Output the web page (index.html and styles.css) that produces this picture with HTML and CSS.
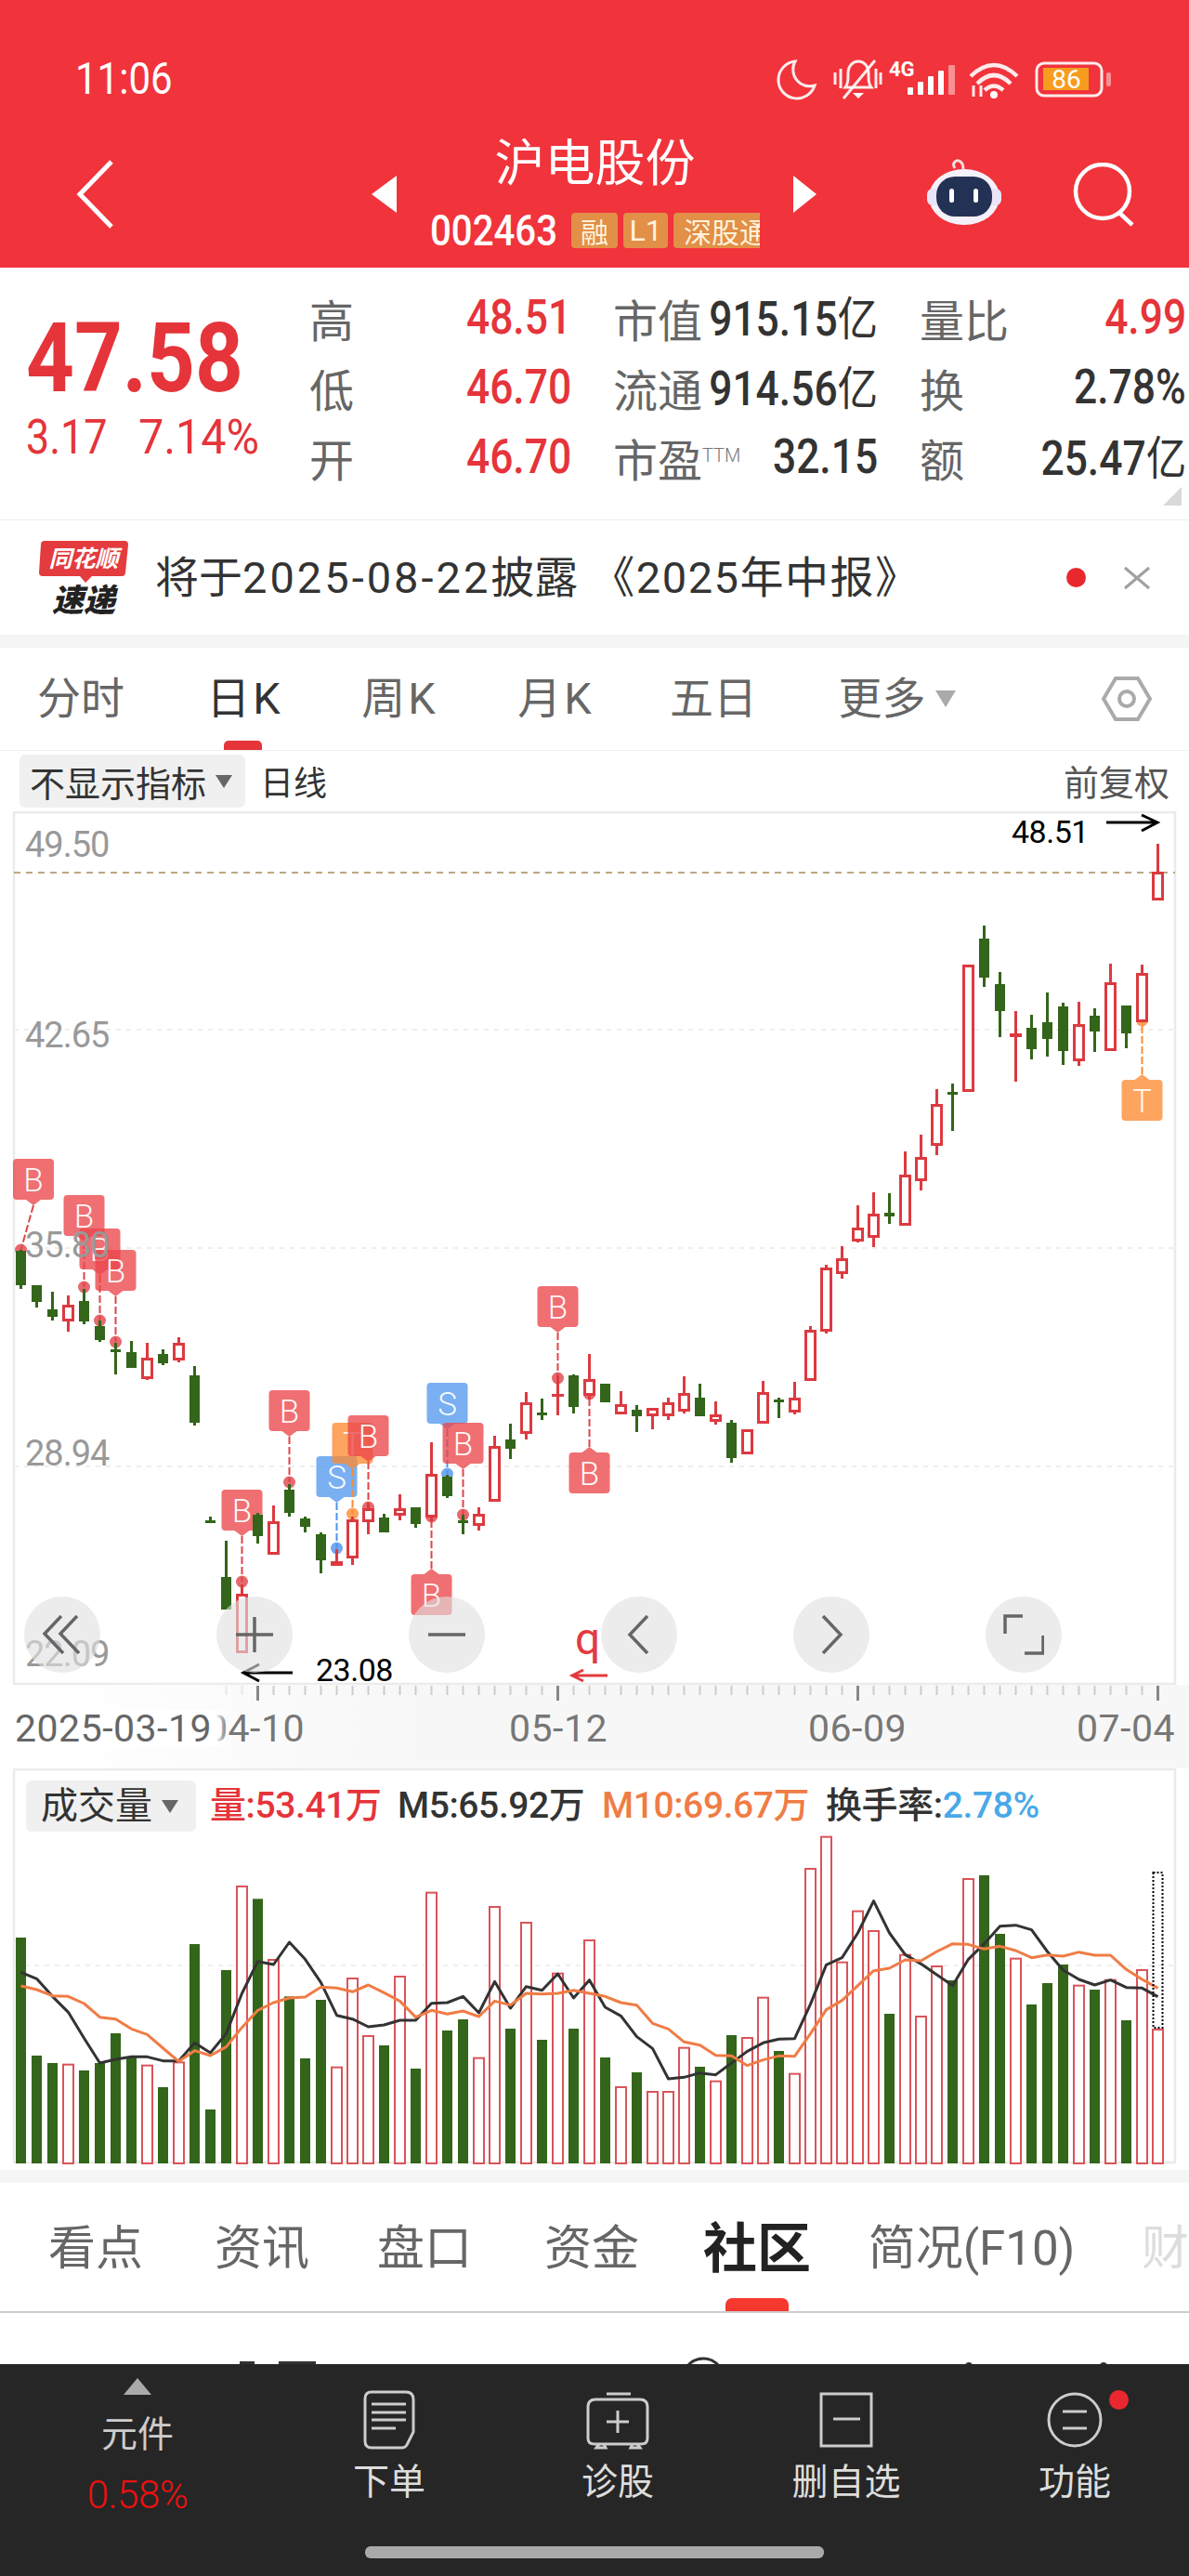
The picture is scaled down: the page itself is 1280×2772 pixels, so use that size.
FILE: index.html
```html
<!DOCTYPE html>
<html lang="zh-CN">
<head>
    <meta charset="UTF-8">
    <title>沪电股份 002463</title>
    <link rel="stylesheet" href="styles.css">
</head>
<body>
    <header class="top-bar">
        <div class="status-bar">
            <span class="clock">11:06</span>
            <svg class="status-icons" width="362" height="48" viewBox="838 62 362 48">
                <path class="ico-line" d="M858 66a20 20 0 1 0 21 26a18 18 0 0 1-21-26z"/>
                <path class="ico-line" d="M912 94c3-4 3-8 3-15c0-8 5-13 11-13s11 5 11 13c0 7 0 11 3 15z"/>
                <path class="ico-line" d="M944 65l-34 41M901 78v13M907 74v21M945 74v21M950 78v13"/>
                <path class="ico-fill" d="M920 100h12l-6 6z"/>
                <text class="ico-4g" x="959" y="82">4G</text>
                <rect class="ico-fill" x="979" y="94" width="6" height="8" rx="1"/>
                <rect class="ico-fill" x="990" y="88" width="6" height="14" rx="1"/>
                <rect class="ico-fill" x="1001" y="82" width="6" height="20" rx="1"/>
                <rect class="ico-fill" x="1012" y="76" width="6" height="26" rx="1"/>
                <rect class="ico-fill ico-dim" x="1023" y="70" width="7" height="32" rx="1"/>
                <path class="ico-line ico-wifi" d="M1047 82Q1072 58 1097 82M1054 90Q1072 72 1090 90M1062 97Q1072 88 1082 97"/>
                <circle class="ico-fill" cx="1072" cy="102" r="4"/>
                <path class="ico-line" d="M1050 92v12M1058 92v12"/>
                <rect class="ico-line" x="1118" y="68" width="70" height="35" rx="8"/>
                <rect class="ico-battery" x="1125" y="73" width="49" height="24"/>
                <rect class="ico-fill ico-dim" x="1193" y="78" width="5" height="15" rx="2"/>
                <text class="ico-86" x="1150" y="95">86</text>
            </svg>
        </div>
        <nav class="stock-nav">
            <svg class="back-icon" width="44" height="76" viewBox="0 0 44 76"><path d="M38 3L4 38l34 35"/></svg>
            <div class="stock-switch">
                <span class="tri-left"></span>
                <div class="stock-name">
                    <h1>沪电股份</h1>
                    <div class="stock-code">
                        <b>002463</b>
                        <span class="tag">融</span>
                        <span class="tag tag-l1">L1</span>
                        <span class="tag tag-clip">深股通</span>
                    </div>
                </div>
                <span class="tri-right"></span>
            </div>
            <svg class="robot-icon" width="80" height="74" viewBox="0 0 80 74">
                <path class="robot-ant" d="M30 12c-4-6 2-10 6-7c3 2 3 6 3 9"/>
                <ellipse class="robot-head" cx="40" cy="43" rx="38" ry="30"/>
                <rect class="robot-side" x="0" y="34" width="80" height="18" rx="6"/>
                <rect class="robot-face" x="10" y="21" width="60" height="43" rx="20"/>
                <rect class="robot-eye" x="24" y="34" width="5" height="15" rx="2.5"/>
                <rect class="robot-eye" x="50" y="34" width="5" height="15" rx="2.5"/>
            </svg>
            <svg class="search-icon" width="68" height="70" viewBox="0 0 68 70"><circle cx="32" cy="31" r="29"/><path d="M50 54l14 13"/></svg>
        </nav>
    </header>

    <section class="quote">
        <div class="price-box">
            <div class="price">47.58</div>
            <div class="price-change"><span class="change-abs">3.17</span><span class="change-pct">7.14%</span></div>
        </div>
        <div class="quote-grid">
            <div class="cell"><span class="cell-name">高</span><span class="num up">48.51</span></div>
            <div class="cell"><span class="cell-name">市值</span><span class="num">915.15<i class="unit">亿</i></span></div>
            <div class="cell"><span class="cell-name">量比</span><span class="num up">4.99</span></div>
            <div class="cell"><span class="cell-name">低</span><span class="num up">46.70</span></div>
            <div class="cell"><span class="cell-name">流通</span><span class="num">914.56<i class="unit">亿</i></span></div>
            <div class="cell"><span class="cell-name">换</span><span class="num">2.78%</span></div>
            <div class="cell"><span class="cell-name">开</span><span class="num up">46.70</span></div>
            <div class="cell"><span class="cell-name">市盈<small>TTM</small></span><span class="num">32.15</span></div>
            <div class="cell"><span class="cell-name">额</span><span class="num">25.47<i class="unit">亿</i></span></div>
        </div>
        <span class="corner-mark"></span>
    </section>

    <section class="news">
        <svg class="news-logo" width="96" height="80" viewBox="0 0 96 80">
            <path class="logo-bubble" d="M6 0h86q4 0 4 4l-3 30q0 4-4 4h-32l-7 7l-6-7h-40q-4 0-4-4l2-30q0-4 4-4z"/>
            <text class="logo-top" x="48" y="28">同花顺</text>
            <text class="logo-bottom" x="48" y="76">速递</text>
        </svg>
        <p class="news-text">将于<span class="news-date">2025-08-22</span>披露<span class="news-book">《2025年中报》</span></p>
        <span class="news-dot"></span>
        <svg class="news-close" width="30" height="26" viewBox="0 0 30 26"><path d="M2 2l26 22M28 2L2 24"/></svg>
    </section>

    <div class="band"></div>

    <nav class="period-tabs">
        <span>分时</span>
        <span class="active">日<i class="k">K</i></span>
        <span>周<i class="k">K</i></span>
        <span>月<i class="k">K</i></span>
        <span>五日</span>
        <span class="more">更多<i class="drop"></i></span>
        <svg class="hex-icon" width="54" height="50" viewBox="0 0 54 50"><path d="M15 3h24l13 22l-13 22H15L2 25z"/><circle cx="27" cy="25" r="8"/></svg>
    </nav>

    <div class="chart-head">
        <span class="select-box">不显示指标<i class="drop drop-dark"></i></span>
        <span class="chart-type">日线</span>
        <span class="adjust">前复权</span>
    </div>

    <div class="kline">
        <svg id="klineSvg" width="1280" height="940" viewBox="0 873 1280 940"></svg>
        <div class="chart-controls">
            <span class="round-btn"><svg width="42" height="42" viewBox="0 0 42 42"><path d="M20 1L2 20l20 21M37 1L19 20l20 21"/></svg></span>
            <span class="round-btn"><svg width="42" height="42" viewBox="0 0 42 42"><path d="M1 21h40M21 2v38"/></svg></span>
            <span class="round-btn"><svg width="42" height="42" viewBox="0 0 42 42"><path d="M1 21h40"/></svg></span>
            <span class="round-btn"><svg width="42" height="42" viewBox="0 0 42 42"><path d="M30 1L11 21l19 20"/></svg></span>
            <span class="round-btn"><svg width="42" height="42" viewBox="0 0 42 42"><path d="M12 1l19 20l-19 20"/></svg></span>
            <span class="round-btn"><svg width="44" height="44" viewBox="0 0 44 44"><path d="M21 2H2v19M43 23v19H23"/></svg></span>
        </div>
    </div>

    <div class="date-axis">
        <svg id="tickSvg" width="1280" height="18" viewBox="0 0 1280 18"></svg>
        <div class="date-labels">
            <span class="date-first">2025-03-19</span>
            <span>04-10</span>
            <span>05-12</span>
            <span>06-09</span>
            <span>07-04</span>
        </div>
    </div>

    <div class="volume">
        <svg id="volumeSvg" width="1280" height="432" viewBox="0 1903 1280 432"></svg>
        <div class="volume-legend">
            <span class="select-box select-vol">成交量<i class="drop drop-dark"></i></span>
            <span class="up">量:53.41万</span>
            <span>M5:65.92万</span>
            <span class="ma10">M10:69.67万</span>
            <span>换手率:<em>2.78%</em></span>
        </div>
    </div>

    <div class="band"></div>

    <nav class="info-tabs">
        <span>看点</span>
        <span>资讯</span>
        <span>盘口</span>
        <span>资金</span>
        <span class="active">社区</span>
        <span>简况(F10)</span>
        <span class="faded">财</span>
    </nav>

    <div class="peek">
        <svg width="1280" height="55" viewBox="0 2489 1280 55">
            <circle class="peek-arc" cx="757" cy="2560" r="22"/>
            <rect class="peek-mark" x="258" y="2541" width="16" height="3"/>
            <rect class="peek-mark" x="300" y="2541" width="40" height="3"/>
            <circle class="peek-dot" cx="1043" cy="2546" r="4"/>
            <circle class="peek-dot" cx="1188" cy="2546" r="4"/>
        </svg>
    </div>

    <footer class="action-bar">
        <div class="action action-sector">
            <i class="sector-tri"></i>
            <span>元件</span>
            <b>0.58%</b>
        </div>
        <div class="action">
            <svg width="56" height="64" viewBox="0 0 56 64"><path d="M9 2h37q8 0 8 8v35l-7 14q-2 3-5 3H9q-7 0-7-7V9q0-7 7-7z"/><path d="M9 15h37M9 24h37M9 32h37M9 41h26"/></svg>
            <span>下单</span>
        </div>
        <div class="action">
            <svg width="68" height="64" viewBox="0 0 68 64"><path d="M22 4h26"/><path d="M10 10h48q8 0 8 8v34q0 6-7 6H9q-7 0-7-6V18q0-8 8-8z"/><path d="M34 22v24M22 34h24M14 58l-3 4h10l-2-4M50 58l-2 4h10l-3-4"/></svg>
            <span>诊股</span>
        </div>
        <div class="action">
            <svg width="58" height="64" viewBox="0 0 58 64"><path d="M2 4h54v56H2z"/><path d="M15 31h29"/></svg>
            <span>删自选</span>
        </div>
        <div class="action action-menu">
            <svg width="62" height="64" viewBox="0 0 62 64"><circle cx="31" cy="32" r="28"/><path d="M18 23h26M18 41h26"/></svg>
            <i class="menu-dot"></i>
            <span>功能</span>
        </div>
        <div class="home-bar"></div>
    </footer>

    <script src="script.js"></script>
</body>
</html>
```
FILE: styles.css
```css
* {
    margin: 0;
    padding: 0;
    box-sizing: border-box;
}

:root {
    --num: Roboto, sans-serif;
    --cjk: "Noto Sans CJK SC", sans-serif;
    --up: #e5343a;
    --down: #33651a;
}

body {
    width: 1280px;
    height: 2772px;
    overflow: hidden;
    background: #fff;
    color: #333;
    font-family: Roboto, "Noto Sans CJK SC", sans-serif;
}

i, em {
    font-style: normal;
}

.up {
    color: var(--up);
}

/* Red header */
.top-bar {
    height: 288px;
    background: #f1333b;
    color: #fff;
}

.status-bar {
    height: 142px;
    display: flex;
    align-items: flex-start;
    justify-content: space-between;
    padding: 62px 82px 0 81px;
}

/* the app's digits are narrower than Roboto, so they are squeezed */
.clock {
    width: 105px;
    font-size: 48px;
    line-height: 46px;
    white-space: nowrap;
    transform: scaleX(.875);
    transform-origin: left;
}

.ico-line {
    fill: none;
    stroke: #fff;
    stroke-width: 3;
    stroke-opacity: .9;
}

.ico-wifi {
    stroke-width: 4.5;
}

.ico-fill {
    fill: #fff;
}

.ico-dim {
    opacity: .45;
}

.ico-battery {
    fill: #f79c1f;
}

.ico-4g {
    fill: #fff;
    font: 700 22px Roboto, sans-serif;
}

.ico-86 {
    fill: #fff;
    font: 400 28px Roboto, sans-serif;
    text-anchor: middle;
}

.stock-nav {
    height: 146px;
    display: flex;
    align-items: flex-start;
    padding-left: 82px;
    position: relative;
}

.back-icon {
    margin-top: 29px;
    fill: none;
    stroke: #fff;
    stroke-width: 5;
}

.stock-switch {
    display: flex;
    align-items: flex-start;
    margin-left: 274px;
    width: 479px;
    justify-content: space-between;
}

.tri-left, .tri-right {
    width: 0;
    height: 0;
    margin-top: 47px;
    border-top: 20px solid transparent;
    border-bottom: 20px solid transparent;
}

.tri-left {
    border-right: 27px solid #fff;
}

.tri-right {
    border-left: 25px solid #fff;
}

.stock-name {
    text-align: center;
}

.stock-name h1 {
    font: 400 54px/60px var(--cjk);
}

.stock-code {
    display: flex;
    align-items: center;
    margin-top: 27px;
}

.stock-code b {
    width: 135px;
    font: 500 47px/38px var(--num);
    margin-right: 17px;
    white-space: nowrap;
    text-align: left;
    transform: scaleX(.855);
    transform-origin: left;
}

.tag {
    height: 38px;
    width: 50px;
    margin-right: 6px;
    background: #e28f47;
    border-radius: 4px;
    color: #fff3dc;
    font: 400 30px/38px var(--cjk);
    text-align: center;
}

.tag-l1 {
    width: 48px;
    font-family: Roboto, sans-serif;
    font-size: 32px;
}

.tag-clip {
    width: 93px;
    margin-right: 0;
    padding-left: 11px;
    overflow: hidden;
    text-align: left;
    white-space: nowrap;
    border-radius: 4px 0 0 4px;
}

.robot-icon {
    margin-left: 119px;
    margin-top: 27px;
}

.robot-ant {
    fill: none;
    stroke: #f5dcdc;
    stroke-width: 3;
}

.robot-head {
    fill: #f4f1fb;
}

.robot-side {
    fill: #e9e4f7;
}

.robot-face {
    fill: #233254;
}

.robot-eye {
    fill: #fff;
}

.search-icon {
    margin-left: 77px;
    margin-top: 33px;
    fill: none;
    stroke: #fff;
    stroke-width: 4.5;
}

/* Quote block */
.quote {
    height: 271px;
    display: flex;
    position: relative;
}

.price-box {
    width: 335px;
    padding: 48px 0 0 28px;
    color: var(--up);
}

.price {
    font: 700 104px/100px var(--num);
    transform: scaleX(.87);
    transform-origin: left;
}

.price-change {
    display: flex;
    margin-top: 12px;
    font: 400 51px/46px var(--num);
    white-space: nowrap;
}

.change-abs {
    width: 121px;
    transform: scaleX(.88);
    transform-origin: left;
}

.change-pct {
    transform: scaleX(.95);
    transform-origin: left;
}

.quote-grid {
    display: grid;
    grid-template-columns: 280px 283px 285px;
    grid-auto-rows: 75px;
    column-gap: 47px;
    padding-top: 16px;
}

.cell {
    display: flex;
    align-items: center;
    justify-content: space-between;
    white-space: nowrap;
}

.cell-name {
    margin-left: -2px;
    font: 400 48px/60px var(--cjk);
    color: #666;
}

.cell-name small {
    font: 300 20px/20px Roboto, sans-serif;
    vertical-align: 16px;
    color: #777;
}

.num {
    margin-left: -40px;
    font: 500 51px/60px var(--num);
    transform: scaleX(.87);
    transform-origin: right;
}

.unit {
    font: 400 50px/60px var(--cjk);
}

.corner-mark {
    position: absolute;
    right: 8px;
    bottom: 15px;
    width: 0;
    height: 0;
    border-left: 20px solid transparent;
    border-bottom: 20px solid #d9d9d9;
}

/* News strip */
.news {
    height: 124px;
    display: flex;
    align-items: center;
    padding: 0 41px 0 42px;
    border-top: 1px solid #ececec;
}

.logo-bubble {
    fill: #e33b3e;
}

.logo-top {
    fill: #fff;
    font: italic 700 25px var(--cjk);
    text-anchor: middle;
}

.logo-bottom {
    fill: #222;
    font: italic 900 34px var(--cjk);
    text-anchor: middle;
}

.news-text {
    margin-left: 29px;
    flex: 1;
    font: 400 47px/60px Roboto, "Noto Sans CJK SC", sans-serif;
    white-space: nowrap;
}

.news-date {
    letter-spacing: 3px;
}

.news-book {
    margin-left: 14px;
    letter-spacing: 1.5px;
}

.news-dot {
    width: 21px;
    height: 21px;
    border-radius: 50%;
    background: #e8282e;
}

.news-close {
    margin-left: 40px;
    fill: none;
    stroke: #a0a0a0;
    stroke-width: 3;
}

.band {
    height: 14px;
    background: #f5f5f5;
}

/* Period tabs */
.period-tabs {
    height: 111px;
    display: grid;
    grid-template-columns: 174px 176px 158px 178px 164px 202px 1fr;
    align-items: center;
    border-bottom: 1px solid #eee;
    color: #666;
    font: 400 47px/60px Roboto, "Noto Sans CJK SC", sans-serif;
    text-align: center;
}

.k {
    margin-left: 3px;
}

.period-tabs .active {
    position: relative;
    color: #333;
}

.period-tabs .active::after {
    content: '';
    position: absolute;
    left: 67px;
    width: 41px;
    bottom: -25px;
    height: 10px;
    border-radius: 5px 5px 0 0;
    background: #e6343a;
}

.more {
    display: flex;
    align-items: center;
    justify-content: center;
    padding-left: 29px;
}

.drop {
    display: inline-block;
    width: 0;
    height: 0;
    margin-left: 10px;
    border-left: 11px solid transparent;
    border-right: 11px solid transparent;
    border-top: 18px solid #aaa;
}

.hex-icon {
    justify-self: start;
    margin-left: 134px;
    fill: none;
    stroke: #aaa;
    stroke-width: 4;
}

/* Chart heading */
.chart-head {
    height: 65px;
    display: flex;
    align-items: flex-start;
    padding: 4px 21px 0;
    font: 400 38px/56px var(--cjk);
}

.select-box {
    display: flex;
    align-items: center;
    width: 243px;
    height: 57px;
    padding-left: 11px;
    background: #f0f0f0;
    border-radius: 6px;
    color: #333;
}

.drop-dark {
    margin-left: 10px;
    border-left-width: 9px;
    border-right-width: 9px;
    border-top: 14px solid #666;
}

.chart-type {
    margin-left: 16px;
    font-size: 36px;
}

.adjust {
    margin-left: auto;
    color: #555;
}

/* Candlestick chart */
.kline {
    height: 940px;
    position: relative;
}

.kline svg {
    display: block;
}

.frame {
    fill: none;
    stroke: #ebebeb;
    stroke-width: 2.5;
}

.grid-line {
    stroke: #eee;
    stroke-width: 2;
    stroke-dasharray: 5 6;
}

.high-line {
    stroke: #bfa680;
    stroke-width: 2;
    stroke-dasharray: 7 6;
}

.wick-up {
    stroke: #dc3a40;
    stroke-width: 3;
}

.wick-down {
    stroke: var(--down);
    stroke-width: 3;
}

.body-up {
    fill: #fff;
    stroke: #dc3a40;
    stroke-width: 3;
}

.body-solid {
    fill: #dc3a40;
}

.body-down {
    fill: var(--down);
}

.axis-text {
    fill: #999;
    font: 400 38px Roboto, sans-serif;
    letter-spacing: -1px;
}

.extreme-text {
    fill: #000;
    font: 400 34px Roboto, sans-serif;
    letter-spacing: -.5px;
}

.arrow {
    fill: none;
    stroke: #000;
    stroke-width: 3;
}

.arrow-red {
    stroke: #e33b40;
}

.q-text {
    fill: #e33b40;
    font: 400 48px Roboto, sans-serif;
}

.mark-b { fill: rgba(235, 70, 74, .78); }
.mark-s { fill: rgba(78, 148, 236, .75); }
.mark-t { fill: rgba(253, 138, 50, .78); }

.lead-b { stroke: #e0444a; fill: #e0444a; }
.lead-s { stroke: #4e94ec; fill: #4e94ec; }
.lead-t { stroke: #fd8a32; fill: #fd8a32; }

.lead {
    stroke-width: 2;
    stroke-dasharray: 8 3;
}

.dot {
    stroke: none;
    opacity: .8;
}

.mark-text {
    fill: rgba(255, 255, 255, .95);
    font: 300 35px Roboto, sans-serif;
    text-anchor: middle;
}

.chart-controls {
    position: absolute;
    left: 26px;
    top: 845px;
    display: flex;
    gap: 125px;
}

.round-btn {
    width: 82px;
    height: 82px;
    display: flex;
    align-items: center;
    justify-content: center;
    border-radius: 50%;
    background: rgba(224, 224, 224, .62);
}

.round-btn svg {
    fill: none;
    stroke: #666;
    stroke-width: 3.5;
}

/* Dates under the chart */
.date-axis {
    height: 90px;
    background: linear-gradient(to right, #fff 5%, #f7f7f7 35%);
}

.date-axis svg {
    display: block;
}

.tick {
    stroke: #ccc;
    stroke-width: 2;
}

.tick-major {
    stroke: #888;
    stroke-width: 3;
}

.date-labels {
    display: grid;
    grid-template-columns: 206px 326px 322px 289px 1fr;
    padding: 9px 0 0 16px;
    font: 400 41px/40px Roboto, sans-serif;
    letter-spacing: .5px;
    color: #777;
    white-space: nowrap;
}

.date-first {
    position: relative;
    z-index: 1;
    width: 228px;
    color: #666;
    background: linear-gradient(to right, #fff 95%, transparent);
}

/* Volume panel */
.volume {
    height: 432px;
    position: relative;
}

.volume svg {
    display: block;
}

.volume-legend {
    position: absolute;
    left: 28px;
    top: 13px;
    display: grid;
    grid-template-columns: 198px 202px 220px 241px auto;
    align-items: center;
    font: 500 39px/55px Roboto, "Noto Sans CJK SC", sans-serif;
    letter-spacing: -.4px;
    white-space: nowrap;
}

.select-vol {
    width: 183px;
    height: 55px;
    padding-left: 16px;
    font-size: 40px;
    font-weight: 400;
    letter-spacing: 0;
}

.ma10 {
    color: #f07c45;
}

.volume-legend em {
    color: #49a9e8;
}

.bar-up {
    fill: #fff;
    stroke: #d9545a;
    stroke-width: 2;
}

.bar-down {
    fill: var(--down);
}

.ma5, .ma10-line {
    fill: none;
    stroke-width: 3;
    stroke-linejoin: round;
}

.ma5 { stroke: #333; }
.ma10-line { stroke: #f07c45; }

.last-box {
    fill: none;
    stroke: #000;
    stroke-width: 2;
    stroke-dasharray: 2 2;
}

/* Lower tabs */
.info-tabs {
    height: 140px;
    display: grid;
    grid-template-columns: 206px 152px 198px 162px 194px 268px 1fr;
    align-items: center;
    padding-top: 4px;
    border-bottom: 2px solid #ccc;
    color: #666;
    font: 400 51px/60px Roboto, "Noto Sans CJK SC", sans-serif;
    text-align: center;
    white-space: nowrap;
}

.info-tabs .active {
    position: relative;
    color: #222;
    font-size: 58px;
    font-weight: 700;
}

.info-tabs .active::after {
    content: '';
    position: absolute;
    left: 63px;
    width: 68px;
    bottom: -37px;
    height: 14px;
    border-radius: 7px 7px 0 0;
    background: #f5392f;
}

.info-tabs .faded {
    text-align: left;
    padding-left: 49px;
    color: #ddd;
}

.peek {
    height: 55px;
}

.peek svg {
    display: block;
}

.peek-arc {
    fill: none;
    stroke: #333;
    stroke-width: 3;
}

.peek-mark, .peek-dot {
    fill: #333;
}

/* Bottom action bar */
.action-bar {
    height: 228px;
    position: relative;
    display: grid;
    grid-template-columns: 296px repeat(4, 246px);
    background: #262626;
    color: #ddd;
    font: 400 39px/44px var(--cjk);
}

.action {
    display: flex;
    flex-direction: column;
    align-items: center;
    padding-top: 28px;
    position: relative;
}

.action svg {
    fill: none;
    stroke: #ccc;
    stroke-width: 3;
}

.action > span {
    margin-top: 9px;
}

.action-sector {
    padding-top: 15px;
    color: #ccc;
}

.action-sector > span {
    margin-top: 17px;
}

.action-sector b {
    margin-top: 25px;
    font: 300 42px/44px Roboto, sans-serif;
    letter-spacing: -.5px;
    color: #ee1010;
}

.sector-tri {
    width: 0;
    height: 0;
    border-left: 15px solid transparent;
    border-right: 15px solid transparent;
    border-bottom: 18px solid #aaa;
}

.menu-dot {
    position: absolute;
    left: 160px;
    top: 28px;
    width: 21px;
    height: 21px;
    border-radius: 50%;
    background: #e8282e;
}

.home-bar {
    position: absolute;
    left: 393px;
    top: 196px;
    width: 494px;
    height: 13px;
    border-radius: 6px;
    background: #aaa;
}
```
FILE: script.js
```js
// x of candle i on the page
function cx(i) {
    return 22.5 + 17 * i;
}

// [wickTop, bodyTop, bodyBottom, wickBottom, up] in page pixels
const candles = [
    [1345, 1346, 1383, 1387, 0], [1383, 1383, 1401, 1407, 0], [1390, 1409, 1417, 1421, 0], [1394, 1404, 1422, 1433, 1],
    [1387, 1400, 1422, 1425, 0], [1421, 1427, 1442, 1444, 0], [1445, 1452, 1455, 1479, 0], [1443, 1455, 1472, 1472, 0],
    [1445, 1461, 1484, 1485, 1], [1452, 1457, 1467, 1469, 0], [1439, 1445, 1464, 1466, 1], [1470, 1480, 1531, 1534, 0],
    [1632, 1636, 1639, 1639, 0], [1658, 1697, 1732, 1732, 0], [1705, 1715, 1779, 1779, 1], [1628, 1630, 1653, 1661, 0],
    [1620, 1637, 1673, 1673, 1], [1597, 1603, 1628, 1632, 0], [1632, 1634, 1643, 1649, 0], [1649, 1651, 1679, 1693, 0],
    [1667, 1680, 1685, 1685, 1], [1632, 1635, 1677, 1684, 1], [1617, 1623, 1638, 1651, 1], [1629, 1633, 1649, 1649, 0],
    [1608, 1623, 1631, 1636, 1], [1622, 1622, 1640, 1644, 0], [1552, 1586, 1633, 1637, 1], [1587, 1589, 1610, 1612, 0],
    [1630, 1636, 1639, 1651, 0], [1622, 1629, 1642, 1647, 1], [1545, 1556, 1616, 1616, 1], [1532, 1549, 1559, 1570, 0],
    [1498, 1509, 1543, 1549, 1], [1505, 1520, 1523, 1528, 0], [1480, 1500, 1503, 1523, 1], [1479, 1480, 1514, 1521, 0],
    [1457, 1484, 1502, 1506, 1], [1489, 1489, 1509, 1509, 0], [1497, 1511, 1522, 1522, 1], [1512, 1517, 1524, 1541, 0],
    [1515, 1515, 1524, 1538, 1], [1504, 1509, 1524, 1528, 1], [1481, 1499, 1519, 1521, 1], [1489, 1504, 1524, 1524, 0],
    [1508, 1522, 1530, 1533, 1], [1528, 1531, 1569, 1574, 0], [1538, 1538, 1565, 1565, 1], [1486, 1498, 1532, 1532, 1],
    [1504, 1506, 1509, 1526, 0], [1487, 1504, 1520, 1522, 1], [1427, 1431, 1486, 1486, 1], [1361, 1364, 1433, 1435, 1],
    [1341, 1354, 1371, 1376, 1], [1297, 1321, 1336, 1337, 1], [1283, 1306, 1332, 1342, 1], [1284, 1305, 1309, 1317, 0],
    [1239, 1264, 1319, 1319, 1], [1221, 1245, 1271, 1281, 1], [1172, 1188, 1233, 1243, 1], [1166, 1175, 1178, 1217, 0],
    [1038, 1038, 1175, 1175, 1], [996, 1010, 1052, 1062, 0], [1046, 1059, 1088, 1116, 0], [1088, 1112, 1116, 1164, 1],
    [1092, 1106, 1129, 1140, 0], [1068, 1100, 1118, 1137, 0], [1079, 1083, 1131, 1146, 0], [1078, 1102, 1142, 1147, 1],
    [1085, 1093, 1110, 1132, 0], [1037, 1057, 1131, 1131, 1], [1082, 1082, 1112, 1128, 0], [1038, 1047, 1100, 1100, 1],
    [908, 938, 969, 969, 1]
];

// volume panel traces, at three times the page scale, measured from y = 1880
const volumes = [
    615, 996, 1020, 1022, 1044, 1020, 924, 1000, 1025, 1098, 1015, 636, 1170, 720, 447, 490, 684, 805, 1005, 816,
    1031, 744, 930, 963, 738, 1038, 467, 915, 879, 1001, 513, 909, 564, 945, 728, 909, 621, 1002, 1095, 1050,
    1110, 1110, 968, 1032, 1076, 930, 936, 806, 981, 1052, 390, 287, 692, 527, 591, 861, 668, 867, 705, 753,
    423, 414, 603, 680, 831, 762, 702, 767, 783, 749, 882, 717, 909
];
const ma5 = [
    727, 748, 805, 856, 940, 1020, 1008, 1000, 1000, 1013, 1013, 955, 987, 925, 795, 692, 702, 630, 685, 760,
    866, 878, 903, 897, 882, 882, 827, 825, 805, 858, 757, 843, 773, 785, 732, 810, 752, 840, 868, 935,
    973, 1071, 1066, 1052, 1058, 1020, 982, 955, 943, 941, 830, 703, 680, 600, 497, 600, 670, 700, 735, 770,
    685, 635, 578, 575, 590, 660, 720, 750, 768, 752, 776, 778, 806
];
const ma10 = [
    771, 783, 803, 805, 828, 872, 878, 910, 928, 972, 1015, 980, 996, 968, 905, 850, 825, 810, 807, 775,
    778, 790, 768, 793, 820, 872, 850, 862, 852, 870, 820, 833, 795, 797, 795, 785, 795, 805, 825, 833,
    892, 910, 952, 962, 995, 997, 1028, 1010, 997, 998, 925, 848, 818, 770, 722, 714, 687, 690, 660, 635,
    637, 652, 643, 657, 680, 671, 675, 662, 672, 672, 718, 750, 778
];

// buy/sell flags: left edge and top of the square, letter, and the point the leader runs to
const marks = [
    [14, 1247, 'B', 22.5, 1345], [68.5, 1286, 'B', 90.5, 1385], [85.5, 1322, 'B', 107.5, 1421], [102.5, 1345, 'B', 124.5, 1444],
    [238.5, 1603, 'B', 260.5, 1702], [289.5, 1496, 'B', 311.5, 1595], [340.5, 1567, 'S', 362.5, 1666],
    [357.5, 1531, 'T', 379.5, 1629], [374.5, 1523, 'B', 396.5, 1622], [442.5, 1694, 'B', 464.5, 1632],
    [459.5, 1488, 'S', 481.5, 1586], [476.5, 1531, 'B', 498.5, 1630], [578.5, 1384, 'B', 600.5, 1483],
    [612.5, 1563, 'B', 634.5, 1500], [1207.5, 1162, 'T', 1229.5, 1098]
];

function flag(m) {
    const [x, y, letter, px, py] = m;
    const kind = letter.toLowerCase();
    const below = y > py;
    const shape = below
        ? `M${x + 4} ${y}h10l8-6l8 6h10q4 0 4 4v36q0 4-4 4h-36q-4 0-4-4v-36q0-4 4-4z`
        : `M${x + 4} ${y}h36q4 0 4 4v36q0 4-4 4h-10l-8 6l-8-6h-10q-4 0-4-4v-36q0-4 4-4z`;
    const tipY = below ? y - 6 : y + 50;
    return `
        <line class="lead lead-${kind}" x1="${x + 22}" y1="${tipY}" x2="${px}" y2="${py}"/>
        <circle class="dot lead-${kind}" cx="${px}" cy="${py}" r="6.5"/>
        <path class="mark-${kind}" d="${shape}"/>
        <text class="mark-text" x="${x + 22}" y="${y + 35}">${letter}</text>`;
}

function candle(c, i) {
    const [wt, bt, bb, wb, up] = c;
    const x = cx(i);
    let out = '';
    if (up) {
        out += `<path class="wick-up" d="M${x} ${wt}V${bt}M${x} ${bb}V${wb}"/>`;
        if (bb - bt < 7) {
            out += `<rect class="body-solid" x="${x - 6.5}" y="${bt}" width="13" height="${bb - bt}"/>`;
        } else {
            out += `<rect class="body-up" x="${x - 5}" y="${bt + 1.5}" width="10" height="${bb - bt - 3}"/>`;
        }
    } else {
        out += `<path class="wick-down" d="M${x} ${wt}V${wb}"/>`;
        out += `<rect class="body-down" x="${x - 5.5}" y="${bt}" width="11" height="${bb - bt}"/>`;
    }
    return out;
}

function drawKline() {
    const axis = [['49.50', 922], ['42.65', 1127], ['35.80', 1353], ['28.94', 1577], ['22.09', 1793]];
    let html = '<rect class="frame" x="15" y="874" width="1250" height="938"/>';
    [1108, 1343, 1578].forEach(y => {
        html += `<line class="grid-line" x1="15" x2="1265" y1="${y}" y2="${y}"/>`;
    });
    html += '<line class="high-line" x1="15" x2="1265" y1="939" y2="939"/>';
    html += marks.map(flag).join('');
    html += candles.map(candle).join('');
    html += axis.map(a => `<text class="axis-text" x="27" y="${a[1]}">${a[0]}</text>`).join('');
    html += `
        <text class="extreme-text" x="1089" y="907">48.51</text>
        <path class="arrow" d="M1191 885H1245M1229 877l17 8l-17 9"/>
        <text class="extreme-text" x="340" y="1809">23.08</text>
        <path class="arrow" d="M315 1800H262M279 1791l-17 9l17 9"/>
        <text class="q-text" x="619" y="1780">q</text>
        <path class="arrow arrow-red" d="M654 1803H616M628 1797l-12 6l12 6"/>`;
    document.getElementById('klineSvg').innerHTML = html;
}

function drawTicks() {
    const major = [15, 34, 53, 72];
    let html = '';
    candles.forEach((c, i) => {
        if (i < 13) return;
        const x = cx(i);
        const isMajor = major.includes(i);
        const opacity = i < 15 ? ' opacity="0.4"' : '';
        html += `<line class="tick${isMajor ? ' tick-major' : ''}"${opacity} x1="${x}" x2="${x}" y1="1" y2="${isMajor ? 17 : 11}"/>`;
    });
    document.getElementById('tickSvg').innerHTML = html;
}

function traced(v) {
    return 1880 + v / 3;
}

function drawVolume() {
    const base = 2328;
    let html = '<rect class="frame" x="15" y="1904" width="1250" height="423"/>';
    html += '<line class="grid-line" x1="15" x2="1265" y1="2115" y2="2115"/>';
    volumes.forEach((v, i) => {
        const x = cx(i);
        const top = traced(v);
        if (candles[i][4]) {
            html += `<rect class="bar-up" x="${x - 5.5}" y="${top + 1}" width="11" height="${base - top - 1}"/>`;
        } else {
            html += `<rect class="bar-down" x="${x - 5.5}" y="${top}" width="11" height="${base - top}"/>`;
        }
    });
    const line = arr => arr.map((v, i) => `${cx(i)},${traced(v)}`).join(' ');
    html += `<polyline class="ma5" points="${line(ma5)}"/>`;
    html += `<polyline class="ma10-line" points="${line(ma10)}"/>`;
    html += '<rect class="last-box" x="1241.5" y="2015" width="10" height="167"/>';
    document.getElementById('volumeSvg').innerHTML = html;
}

drawKline();
drawTicks();
drawVolume();
```
